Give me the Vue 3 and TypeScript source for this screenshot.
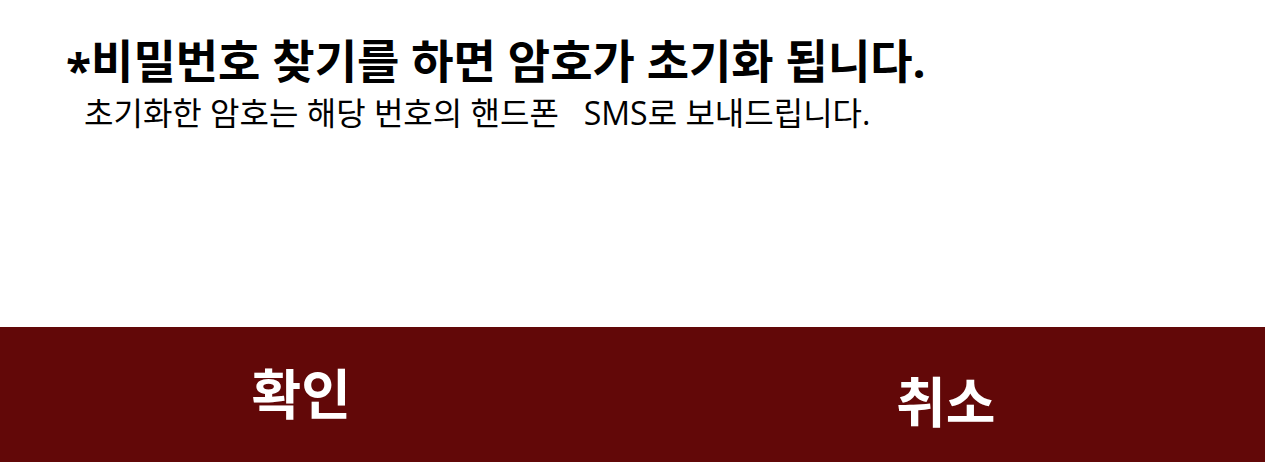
<script setup lang="ts">
function choose(action: string): void {
  window.dispatchEvent(new CustomEvent('password-reset', { detail: action }))
}
</script>

<template>
  <main class="dialog">
    <section class="message">
      <h1 class="title"><span class="marker">*</span>비밀번호 찾기를 하면 암호가 초기화 됩니다.</h1>
      <p class="detail">초기화한 암호는 해당 번호의 핸드폰&nbsp;&nbsp; SMS로 보내드립니다.</p>
    </section>
    <footer class="actions">
      <button class="action confirm" type="button" @click="choose('confirm')">확인</button>
      <button class="action cancel" type="button" @click="choose('cancel')">취소</button>
    </footer>
  </main>
</template>

<style>
body {
  background: #fff;
}
</style>

<style scoped>
.dialog {
  display: flex;
  flex-direction: column;
  min-height: 100vh;
  color: #000;
  font-family: "Open Sans", "Noto Sans CJK KR", sans-serif;
}
.message {
  flex: 1;
  padding: 28px 66px 0;
}
.title {
  margin: 0;
  font-size: 46px;
  line-height: 64px;
  font-weight: 700;
  white-space: nowrap;
}
.marker {
  line-height: 0;
  vertical-align: sub;
}
.detail {
  margin: 0;
  padding-left: 18px;
  font-size: 32px;
  line-height: 42px;
  font-weight: 400;
  white-space: nowrap;
}
.actions {
  display: flex;
  background: #620808;
}
.action {
  flex: 1;
  border: 0;
  background: transparent;
  color: #fff;
  font-family: inherit;
  font-size: 54px;
  line-height: 72px;
  font-weight: 700;
  cursor: pointer;
}
.confirm {
  padding: 31px 42px 32px 0;
}
.cancel {
  padding: 39px 18px 24px 0;
}
</style>
